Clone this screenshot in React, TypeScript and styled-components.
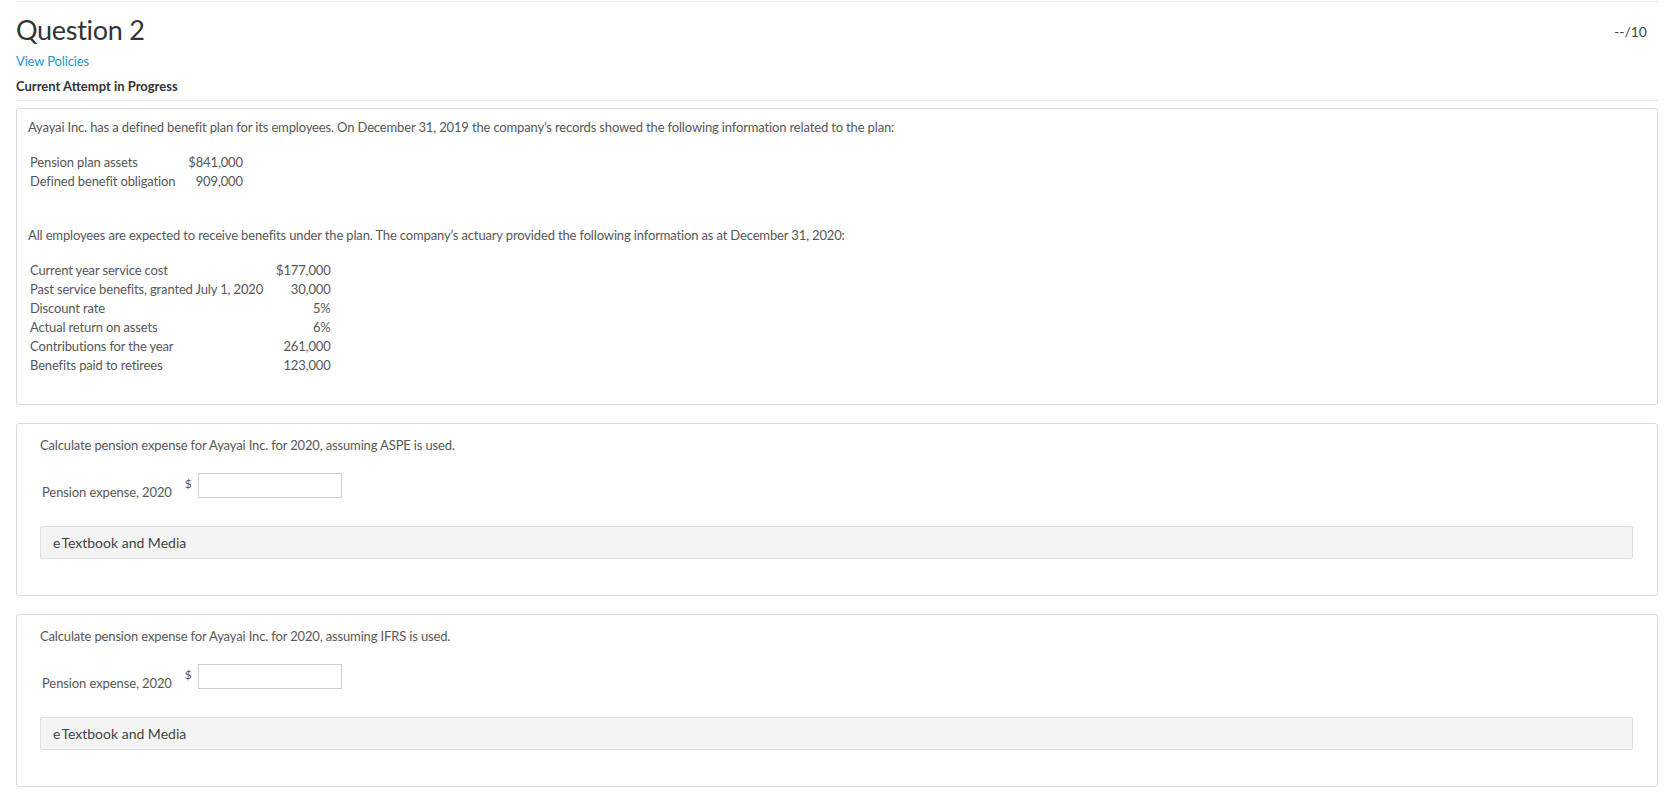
import React from 'react';
import styled, { createGlobalStyle } from 'styled-components';

const GlobalStyle = createGlobalStyle`
  html, body {
    margin: 0;
    padding: 0;
    background: #ffffff;
  }
  body {
    font-family: Lato, "Open Sans", "Liberation Sans", sans-serif;
    color: #575757;
  }
`;

// Conteúdo principal
const Page = styled.div`
  padding: 1px 15px 0 16px;
`;

const Header = styled.header`
  border-top: 1px solid #ebebeb;
  border-bottom: 1px solid #ebebeb;
  padding: 11px 0 5px 0;
  display: flex;
  justify-content: space-between;
  align-items: flex-start;
`;

const HeaderLeft = styled.div`
  display: flex;
  flex-direction: column;
`;

const Title = styled.h1`
  margin: 0;
  font-size: 27px;
  font-weight: 400;
  letter-spacing: -0.3px;
  line-height: 34px;
  color: #333333;
`;

const PolicyLink = styled.a`
  margin-top: 5px;
  font-size: 13px;
  letter-spacing: -0.15px;
  line-height: 18px;
  color: #2b94d4;
  text-decoration: none;
  cursor: pointer;
`;

const AttemptStatus = styled.div`
  margin-top: 7px;
  font-size: 13px;
  font-weight: 700;
  line-height: 18px;
  color: #333333;
`;

const Score = styled.div`
  margin: 10px 11px 0 0;
  font-size: 14px;
  color: #444444;
`;

const Stack = styled.div`
  display: flex;
  flex-direction: column;
  gap: 18px;
  padding-top: 7px;
`;

// Caixa de cada parte da questão
const Card = styled.section<{ $top: number; $side: number; $bottom: number }>`
  border: 1px solid #dcdcdc;
  border-radius: 3px;
  padding: ${(p) => p.$top}px ${(p) => p.$side}px ${(p) => p.$bottom}px ${(p) => p.$side - 1}px;
`;

const Paragraph = styled.p`
  margin: 0;
  font-size: 13px;
  letter-spacing: -0.15px;
  line-height: 19px;
`;

const DataTable = styled.div`
  display: grid;
  grid-template-columns: auto auto;
  justify-content: start;
  column-gap: 13px;
  margin: 16px 0 35px 2px;
  font-size: 13px;
  letter-spacing: -0.15px;
  line-height: 19px;

  &:last-child {
    margin-bottom: 0;
  }
`;

const Label = styled.span``;

const Value = styled.span`
  text-align: right;
`;

const AnswerRow = styled.div`
  display: flex;
  align-items: flex-start;
  margin: 18px 0 24px 2px;
`;

const AnswerLabel = styled.span`
  font-size: 13px;
  letter-spacing: -0.1px;
  line-height: 19px;
  padding-top: 10px;
`;

const Currency = styled.span`
  font-size: 12px;
  line-height: 14px;
  margin: 4px 6px 0 13px;
`;

const AmountInput = styled.input`
  width: 144px;
  height: 25px;
  box-sizing: border-box;
  border: 1px solid #cfcfcf;
  border-radius: 0;
  padding: 0 6px;
  font-family: inherit;
  font-size: 13px;
  color: #333333;
  outline: none;
`;

const MediaBar = styled.div`
  height: 33px;
  box-sizing: border-box;
  border: 1px solid #dedede;
  border-radius: 2px;
  background: #f4f4f4;
  display: flex;
  align-items: center;
  padding-left: 12px;
  font-size: 14px;
  color: #444444;
  cursor: pointer;
`;

const MediaPrefix = styled.span`
  margin-right: 1px;
`;

const planRows = [
  ['Pension plan assets', '$841,000'],
  ['Defined benefit obligation', '909,000'],
];

const actuaryRows = [
  ['Current year service cost', '$177,000'],
  ['Past service benefits, granted July 1, 2020', '30,000'],
  ['Discount rate', '5%'],
  ['Actual return on assets', '6%'],
  ['Contributions for the year', '261,000'],
  ['Benefits paid to retirees', '123,000'],
];

function Rows({ rows }: { rows: string[][] }) {
  return (
    <DataTable>
      {rows.map(([label, value]) => (
        <React.Fragment key={label}>
          <Label>{label}</Label>
          <Value>{value}</Value>
        </React.Fragment>
      ))}
    </DataTable>
  );
}

function AnswerPart({ standard }: { standard: string }) {
  return (
    <Card $top={12} $side={24} $bottom={36}>
      <Paragraph>
        Calculate pension expense for Ayayai Inc. for 2020, assuming {standard} is used.
      </Paragraph>
      <AnswerRow>
        <AnswerLabel>Pension expense, 2020</AnswerLabel>
        <Currency>$</Currency>
        <AmountInput type="text" />
      </AnswerRow>
      <MediaBar>
        <MediaPrefix>e</MediaPrefix>Textbook and Media
      </MediaBar>
    </Card>
  );
}

export default function App() {
  return (
    <>
      <GlobalStyle />
      <Page>
        <Header>
          <HeaderLeft>
            <Title>Question 2</Title>
            <PolicyLink>View Policies</PolicyLink>
            <AttemptStatus>Current Attempt in Progress</AttemptStatus>
          </HeaderLeft>
          <Score>--/10</Score>
        </Header>
        <Stack>
          <Card $top={9} $side={12} $bottom={29}>
            <Paragraph>
              Ayayai Inc. has a defined benefit plan for its employees. On December 31, 2019 the
              company’s records showed the following information related to the plan:
            </Paragraph>
            <Rows rows={planRows} />
            <Paragraph>
              All employees are expected to receive benefits under the plan. The company’s actuary
              provided the following information as at December 31, 2020:
            </Paragraph>
            <Rows rows={actuaryRows} />
          </Card>
          <AnswerPart standard="ASPE" />
          <AnswerPart standard="IFRS" />
        </Stack>
      </Page>
    </>
  );
}
